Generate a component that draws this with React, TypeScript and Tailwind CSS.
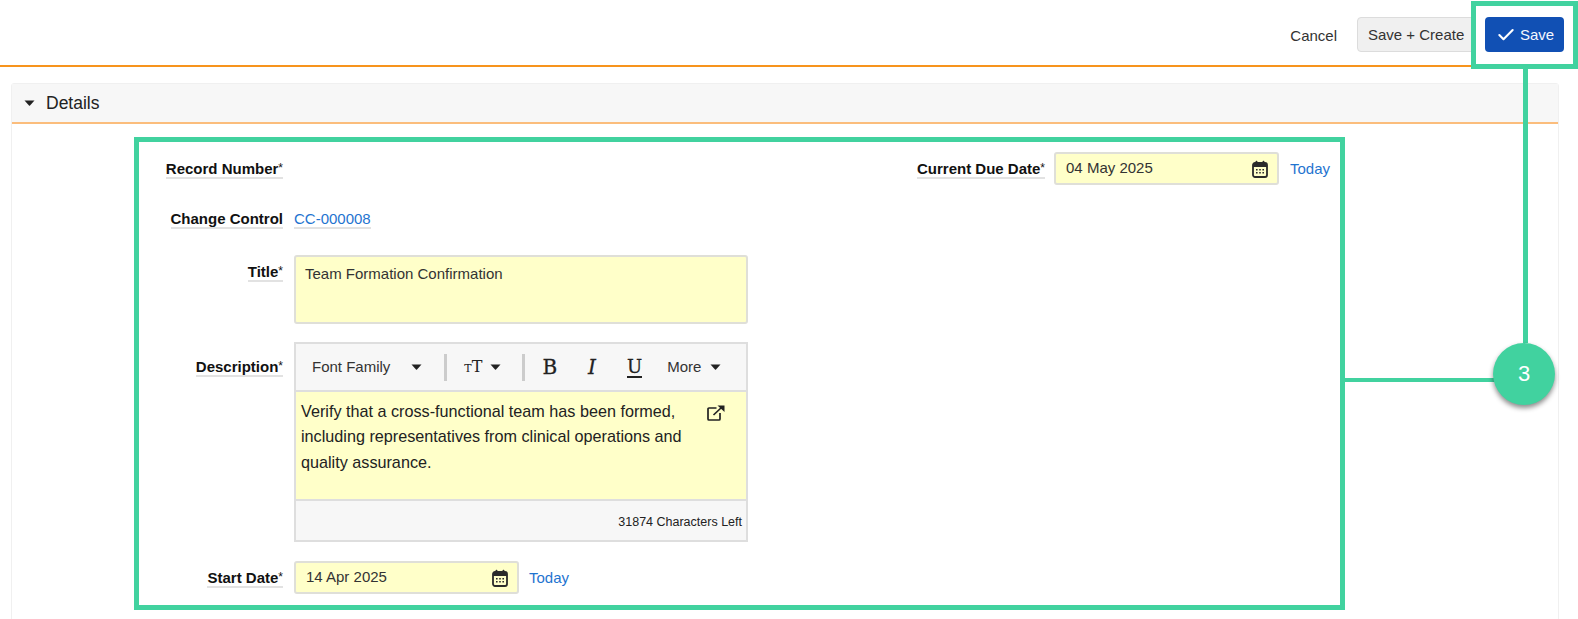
import React from "react";
import { Check } from "lucide-react";

const Caret = ({ className = "" }: { className?: string }) => (
  <svg width="11" height="6" viewBox="0 0 11 6" className={className}>
    <path d="M0.5 0.5h10L6 5.6a0.7 0.7 0 0 1-1 0z" fill="#222" />
  </svg>
);

const CalendarIcon = ({ className = "" }: { className?: string }) => (
  <svg width="16" height="18" viewBox="0 0 16 18" className={className}>
    <rect x="1" y="3" width="14" height="14" rx="2" fill="none" stroke="#2b2b2b" strokeWidth="1.8" />
    <rect x="1" y="3" width="14" height="4" fill="#2b2b2b" />
    <rect x="3.6" y="0.8" width="1.8" height="4" rx="0.8" fill="#2b2b2b" />
    <rect x="10.6" y="0.8" width="1.8" height="4" rx="0.8" fill="#2b2b2b" />
    <g fill="#2b2b2b">
      <rect x="4" y="9" width="1.6" height="1.5" />
      <rect x="7.2" y="9" width="1.6" height="1.5" />
      <rect x="10.4" y="9" width="1.6" height="1.5" />
      <rect x="4" y="12" width="1.6" height="1.5" />
      <rect x="7.2" y="12" width="1.6" height="1.5" />
      <rect x="10.4" y="12" width="1.6" height="1.5" />
    </g>
  </svg>
);

const Label = ({ text, required = true }: { text: string; required?: boolean }) => (
  <span className="inline-block border-b-2 border-[#e2e2e2] text-[15px] font-bold leading-[17px] text-[#111]">
    {text}
    {required && <span className="font-normal text-[12px] align-[2px]">*</span>}
  </span>
);

const DateInput = ({ value }: { value: string }) => (
  <div className="flex h-[33px] w-[225px] items-center justify-between rounded-[3px] border-2 border-[#dfdfd8] bg-[#ffffc9] pl-[10px] pr-[9px]">
    <span className="text-[15px] text-[#333]">{value}</span>
    <CalendarIcon />
  </div>
);

const Today = () => <span className="text-[15px] text-[#1f74d0]">Today</span>;

const LabelCol = ({ children }: { children: React.ReactNode }) => (
  <div className="flex w-[135px] shrink-0 justify-end">{children}</div>
);

const serif = { fontFamily: '"DejaVu Serif", serif' };

export default function App() {
  return (
    <div
      className="relative h-[619px] w-[1578px] overflow-hidden bg-white"
      style={{ fontFamily: '"Liberation Sans", Arial, sans-serif' }}
    >
      <header className="flex h-[67px] items-start justify-end border-b-2 border-[#f7941d] pt-[17px] pr-[14px]">
        <span className="mt-[10px] mr-[20px] text-[15px] leading-[17px] text-[#333]">Cancel</span>
        <button className="mr-[10px] h-[35px] w-[118px] rounded-[4px] border border-[#dcdcdc] bg-[#f0f0f0] pl-[10px] pt-[1px] text-left text-[15px] text-[#333]">
          Save + Create
        </button>
        <button className="flex h-[35px] w-[79px] items-center gap-[4px] rounded-[4px] bg-[#1150b4] pl-[11px] pt-[1px] text-[15px] text-[#f4f7ff]">
          <Check size={20} strokeWidth={2.5} color="#ffffff" />
          Save
        </button>
      </header>

      <section className="mt-[16px] ml-[11px] h-[560px] w-[1548px] rounded-t-[3px] border border-[#f0f0f0]">
        <div className="flex h-[40px] items-center border-b-2 border-[#fbbd7c] bg-[#f7f7f7] pl-[12px]">
          <Caret />
          <span className="ml-[11px] text-[17.5px] text-[#222]">Details</span>
        </div>

        <div className="pl-[136px] pt-[28px]">
          <div className="flex h-[33px] items-start">
            <LabelCol>
              <div className="mt-[5px]">
                <Label text="Record Number" />
              </div>
            </LabelCol>
            <div className="ml-[634px] flex items-start">
              <div className="mt-[5px] mr-[9px]">
                <Label text="Current Due Date" />
              </div>
              <DateInput value="04 May 2025" />
              <div className="ml-[11px] mt-[5px]">
                <Today />
              </div>
            </div>
          </div>

          <div className="mt-[25px] flex h-[24px] items-start">
            <LabelCol>
              <Label text="Change Control" required={false} />
            </LabelCol>
            <span className="ml-[11px] inline-block h-[19px] border-b-2 border-[#e2e2e2] text-[15px] leading-[17px] text-[#1f74d0]">
              CC-000008
            </span>
          </div>

          <div className="mt-[21px] flex items-start">
            <LabelCol>
              <div className="mt-[5px]">
                <Label text="Title" />
              </div>
            </LabelCol>
            <div className="ml-[11px] h-[69px] w-[454px] rounded-[3px] border-2 border-[#dfdfd8] bg-[#ffffc9] pl-[9px] pt-[6px] text-[15px] leading-[21px] text-[#333]">
              Team Formation Confirmation
            </div>
          </div>

          <div className="mt-[18px] flex items-start">
            <LabelCol>
              <div className="mt-[13px]">
                <Label text="Description" />
              </div>
            </LabelCol>
            <div className="ml-[11px] h-[200px] w-[454px] border-2 border-[#dedede]">
              <div className="flex h-[46px] items-center bg-[#f7f7f7] text-[15px] text-[#333]">
                <span className="ml-[16px]">Font Family</span>
                <Caret className="ml-[21px]" />
                <span className="ml-[22px] h-[27px] w-[3px] bg-[#cccccc]" />
                <span className="ml-[17px] flex items-baseline leading-none text-[#222]" style={serif}>
                  <span className="text-[11px]">T</span>
                  <span className="text-[16px]">T</span>
                </span>
                <Caret className="ml-[8px]" />
                <span className="ml-[21px] h-[27px] w-[3px] bg-[#cccccc]" />
                <span className="ml-[17px] text-[20px] leading-none text-[#222] [-webkit-text-stroke:0.3px_#222]" style={serif}>
                  B
                </span>
                <span className="ml-[31px] text-[20px] italic leading-none text-[#222] [-webkit-text-stroke:0.3px_#222]" style={serif}>
                  I
                </span>
                <span className="ml-[31px] border-b-2 border-[#222] text-[18px] leading-[19px] text-[#222] [-webkit-text-stroke:0.3px_#222]" style={serif}>
                  U
                </span>
                <span className="ml-[25px]">More</span>
                <Caret className="ml-[9px]" />
              </div>
              <div className="relative h-[111px] border-y-2 border-[#dedede] bg-[#ffffc9] pl-[5px] pt-[7px] text-[16.2px] leading-[25.3px] text-[#222]">
                <p>Verify that a cross-functional team has been formed,</p>
                <p>including representatives from clinical operations and</p>
                <p>quality assurance.</p>
                <svg width="18" height="16" viewBox="0 0 18 16" className="absolute left-[411px] top-[13px]">
                  <path d="M9.500 3H2a1 1 0 0 0-1 1V14a1 1 0 0 0 1 1h10a1 1 0 0 0 1-1V8" fill="none" stroke="#222" strokeWidth="1.700" />
                  <path d="M6.500 10L15 2" fill="none" stroke="#222" strokeWidth="1.700" />
                  <path d="M10.500 0.500h7v6.500z" fill="#222" />
                </svg>
              </div>
              <div className="flex h-[39px] items-center justify-end bg-[#f7f7f7] pr-[4px] pt-[3px] text-[12.5px] text-[#222]">
                31874 Characters Left
              </div>
            </div>
          </div>

          <div className="mt-[19px] flex items-start">
            <LabelCol>
              <div className="mt-[5px]">
                <Label text="Start Date" />
              </div>
            </LabelCol>
            <div className="ml-[11px]">
              <DateInput value="14 Apr 2025" />
            </div>
            <div className="ml-[10px] mt-[5px]">
              <Today />
            </div>
          </div>
        </div>
      </section>

      {/* Annotation overlay */}
      <div className="absolute left-[134px] top-[137px] h-[473px] w-[1211px] border-[5px] border-[#41d29f]" />
      <div className="absolute left-[1471px] top-[1px] h-[68px] w-[107px] border-[5px] border-[#41d29f]" />
      <div className="absolute left-[1523px] top-[69px] h-[274px] w-[5px] bg-[#41d29f]" />
      <div className="absolute left-[1345px] top-[378px] h-[4px] w-[150px] bg-[#41d29f]" />
      <div className="absolute left-[1493px] top-[343px] flex h-[62px] w-[62px] items-center justify-center rounded-full bg-[#41d29f] pb-[1px] text-[22px] text-white shadow-[0_3px_5px_rgba(0,0,0,0.45)]">
        3
      </div>
    </div>
  );
}
